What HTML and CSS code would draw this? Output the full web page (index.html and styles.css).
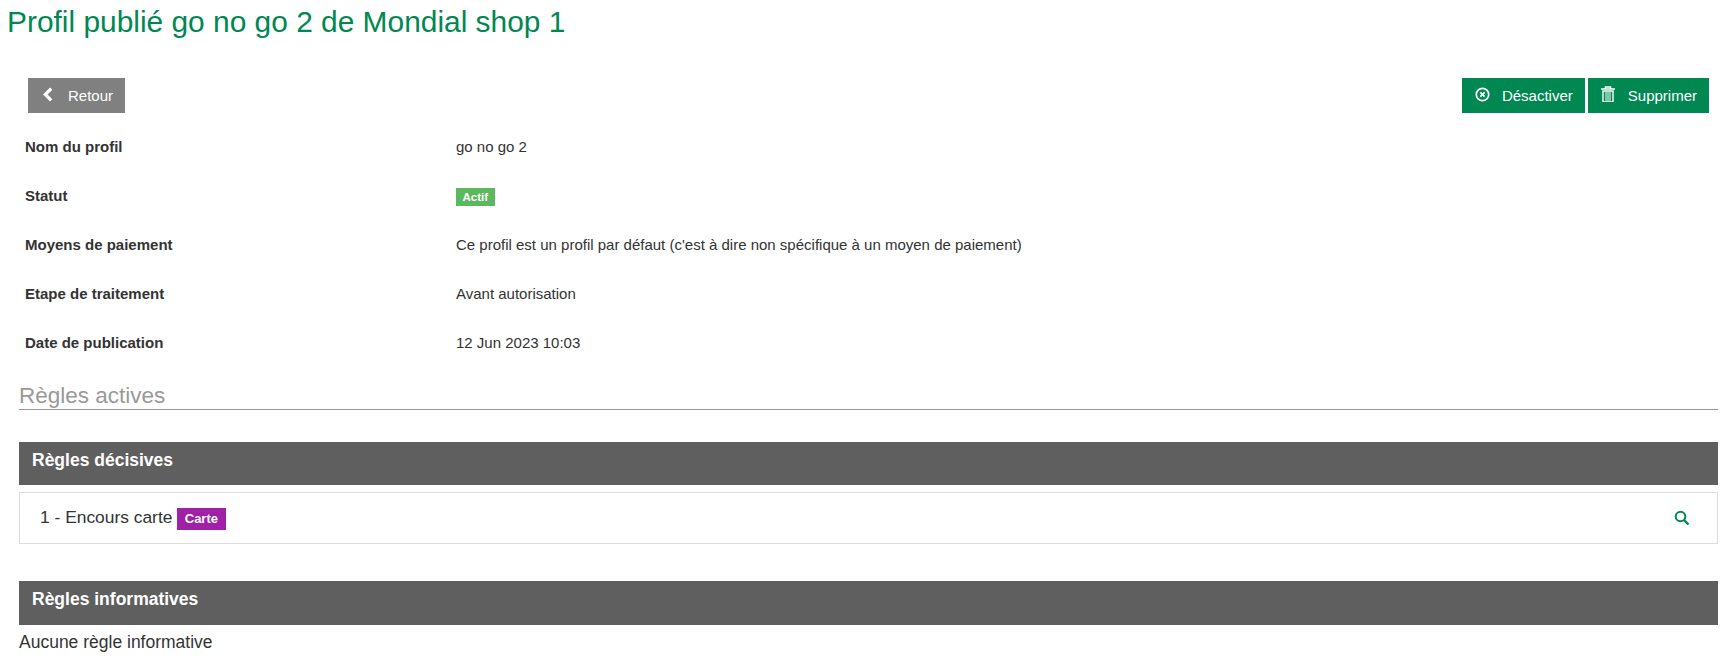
FILE: index.html
```html
<!DOCTYPE html>
<html lang="fr">
<head>
    <meta charset="UTF-8">
    <meta name="viewport" content="width=device-width, initial-scale=1.0">
    <title>Profil publié go no go 2 de Mondial shop 1</title>
    <link rel="stylesheet" href="styles.css">
</head>
<body>
    <h1 class="page-title">Profil publié go no go 2 de Mondial shop 1</h1>

    <div class="content">
        <!-- Actions -->
        <div class="actions">
            <a class="btn btn-grey" href="#">
                <svg class="btn-icon" viewBox="0 0 14 14"><path d="M9.5 1.5 4 7l5.5 5.5" fill="none" stroke="currentColor" stroke-width="3"/></svg>
                Retour
            </a>
            <div class="actions-right">
                <a class="btn btn-green" href="#">
                    <svg class="btn-icon" viewBox="0 0 14 14"><circle cx="7" cy="7" r="5.8" fill="none" stroke="currentColor" stroke-width="1.6"/><path d="M5 5l4 4M9 5 5 9" fill="none" stroke="currentColor" stroke-width="1.6"/></svg>
                    Désactiver
                </a>
                <a class="btn btn-green" href="#">
                    <svg class="btn-icon btn-icon-trash" viewBox="0 0 14 16"><path d="M0 3h14M4.5 3V1h5v2" fill="none" stroke="currentColor" stroke-width="1.6"/><path d="M2 5h10v11H2z" fill="none" stroke="currentColor" stroke-width="1.4"/><path d="M5 6v9M7 6v9M9 6v9" fill="none" stroke="currentColor"/></svg>
                    Supprimer
                </a>
            </div>
        </div>

        <!-- Infos du profil -->
        <dl class="infos">
            <div class="info-row"><dt>Nom du profil</dt><dd>go no go 2</dd></div>
            <div class="info-row"><dt>Statut</dt><dd><span class="badge badge-green">Actif</span></dd></div>
            <div class="info-row"><dt>Moyens de paiement</dt><dd>Ce profil est un profil par défaut (c'est à dire non spécifique à un moyen de paiement)</dd></div>
            <div class="info-row"><dt>Etape de traitement</dt><dd>Avant autorisation</dd></div>
            <div class="info-row"><dt>Date de publication</dt><dd>12 Jun 2023 10:03</dd></div>
        </dl>

        <!-- Règles -->
        <h2 class="section-title">Règles actives</h2>

        <h3 class="panel-title">Règles décisives</h3>
        <div class="rule">
            <div>1 - Encours carte <span class="badge badge-purple">Carte</span></div>
            <a class="rule-link" href="#">
                <svg class="search-icon" viewBox="0 0 16 16"><circle cx="6.5" cy="6.5" r="4.8" fill="none" stroke="currentColor" stroke-width="2"/><path d="M10 10l4.5 4.5" fill="none" stroke="currentColor" stroke-width="2.4"/></svg>
            </a>
        </div>

        <h3 class="panel-title panel-title-second">Règles informatives</h3>
        <p class="empty">Aucune règle informative</p>
    </div>
</body>
</html>
```

FILE: styles.css
```css
/* Global */
body {
    font-family: "Liberation Sans", Arial, sans-serif;
    font-size: 15px;
    line-height: 20px;
    margin: 0;
    background-color: #fff;
    color: #333;
}

/* Titre */
.page-title {
    margin: 0;
    padding: 4px 0 0 7px;
    height: 78px;
    box-sizing: border-box;
    font-size: 29.9px;
    line-height: 36px;
    font-weight: normal;
    color: #008752;
}

.content {
    padding: 0 12px 0 19px;
}

/* Boutons */
.actions {
    display: flex;
    justify-content: space-between;
    padding: 0 9px;
}

.actions-right {
    display: flex;
    gap: 3px;
}

.btn {
    display: flex;
    align-items: center;
    height: 35px;
    padding: 0 12px 0 13px;
    box-sizing: border-box;
    color: #fff;
    text-decoration: none;
}

.btn-grey {
    background-color: #808080;
}

.btn-green {
    background-color: #008752;
}

.btn-icon {
    width: 15px;
    height: 15px;
    margin-right: 12px;
    margin-top: -3px;
}

.btn-icon-trash {
    width: 14px;
    height: 16px;
    margin-right: 13px;
    margin-top: -3px;
}

/* Infos */
.infos {
    margin: 9px 0 0;
}

.info-row {
    display: flex;
    height: 49px;
    align-items: center;
    padding-left: 6px;
}

.info-row dt {
    width: 431px;
    font-weight: bold;
}

.info-row dd {
    margin: 0;
}

.badge {
    display: inline-block;
    color: #fff;
    font-weight: bold;
    font-size: 11.5px;
    line-height: 18px;
    padding: 0 6.5px;
    vertical-align: middle;
}

.badge-green {
    background-color: #5cb85c;
}

.badge-purple {
    background-color: #a021a5;
    font-size: 13px;
    line-height: 22px;
    padding: 0 7.5px;
    margin-top: 2px;
}

/* Sections */
.section-title {
    margin: 16px 0 0;
    font-size: 22.5px;
    line-height: 26px;
    font-weight: normal;
    color: #999;
    border-bottom: 1px solid #999;
}

.panel-title {
    margin: 32px 0 0;
    height: 43px;
    padding: 8px 13px;
    box-sizing: border-box;
    background-color: #5f5f5f;
    color: #fff;
    font-size: 17.5px;
    line-height: 20px;
}

.panel-title-second {
    margin-top: 37px;
    height: 44px;
}

.rule {
    display: flex;
    justify-content: space-between;
    align-items: center;
    margin-top: 7px;
    height: 52px;
    padding: 0 27px 0 20px;
    box-sizing: border-box;
    border: 1px solid #ddd;
    font-size: 17.4px;
}

.rule-link {
    color: #008752;
    display: flex;
}

.search-icon {
    width: 16px;
    height: 16px;
}

.empty {
    margin: 5px 0 0;
    font-size: 17.5px;
    line-height: 24px;
}
```
